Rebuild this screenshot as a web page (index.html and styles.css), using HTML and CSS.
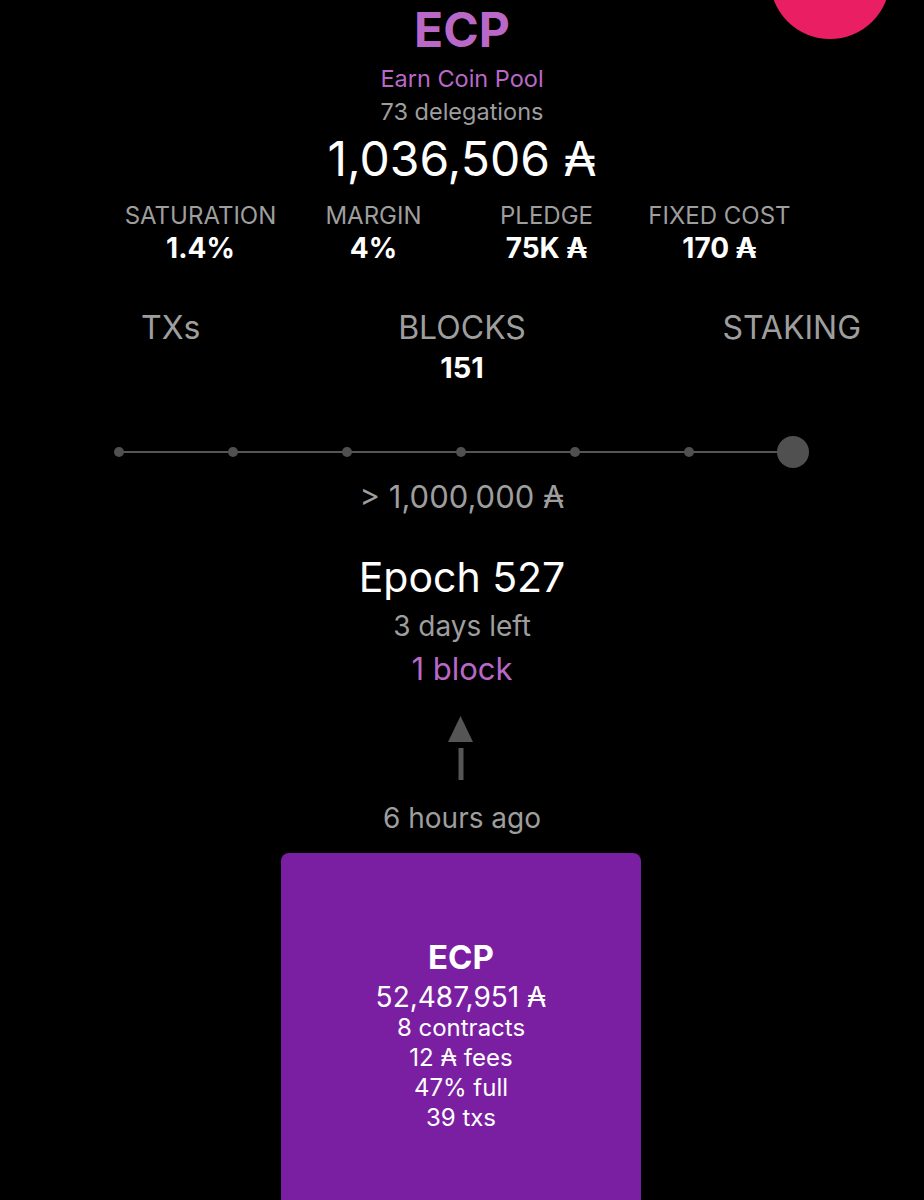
FILE: index.html
```html
<!DOCTYPE html>
<html lang="en">
<head>
  <meta charset="utf-8">
  <link rel="stylesheet" href="styles.css">
</head>
<body>
  <div class="fab"></div>

  <div class="pool">
    <div class="pool-ticker">ECP</div>
    <div class="pool-name">Earn Coin Pool</div>
    <div class="pool-delegations">73 delegations</div>
    <div class="pool-stake">1,036,506 ₳</div>

    <div class="stats">
      <div class="stat">
        <div class="stat-label">SATURATION</div>
        <div class="stat-value">1.4%</div>
      </div>
      <div class="stat">
        <div class="stat-label">MARGIN</div>
        <div class="stat-value">4%</div>
      </div>
      <div class="stat">
        <div class="stat-label">PLEDGE</div>
        <div class="stat-value">75K ₳</div>
      </div>
      <div class="stat">
        <div class="stat-label">FIXED COST</div>
        <div class="stat-value">170 ₳</div>
      </div>
    </div>
  </div>

  <div class="tabs">
    <div class="tab tab-left">TXs</div>
    <div class="tab tab-center">
      BLOCKS
      <div class="tab-count">151</div>
    </div>
    <div class="tab tab-right">STAKING</div>
  </div>

  <!-- stake range slider -->
  <svg class="slider" width="695" height="34" viewBox="0 0 695 34">
    <line x1="5" y1="17" x2="679" y2="17" stroke="#555" stroke-width="2" />
    <circle cx="5" cy="17" r="5" fill="#505050" />
    <circle cx="119" cy="17" r="5" fill="#505050" />
    <circle cx="233" cy="17" r="5" fill="#505050" />
    <circle cx="347" cy="17" r="5" fill="#505050" />
    <circle cx="461" cy="17" r="5" fill="#505050" />
    <circle cx="575" cy="17" r="5" fill="#505050" />
    <circle cx="679" cy="17" r="16" fill="#505050" />
  </svg>
  <div class="slider-label">&gt; 1,000,000 ₳</div>

  <div class="epoch">
    <div class="epoch-title">Epoch 527</div>
    <div class="epoch-left">3 days left</div>
    <div class="epoch-blocks">1 block</div>
  </div>

  <svg class="arrow" width="26" height="64" viewBox="0 0 26 64">
    <polygon points="12.5,0 25,26 0,26" fill="#555" />
    <rect x="10.5" y="32" width="5" height="32" fill="#555" />
  </svg>
  <div class="last-block">6 hours ago</div>

  <div class="block-card">
    <div class="block-pool">ECP</div>
    <div class="block-amount">52,487,951 ₳</div>
    <div class="block-line">8 contracts</div>
    <div class="block-line">12 ₳ fees</div>
    <div class="block-line">47% full</div>
    <div class="block-line">39 txs</div>
  </div>
</body>
</html>
```

FILE: styles.css
```css
:root {
  --bg: #000;
  --fg: #fff;
  --muted: #9e9e9e;
  --accent: #ba68c8;
  --card: #7b1fa2;
  --pink: #e91e63;
}

* {
  box-sizing: border-box;
}

html, body {
  overflow: hidden;
}

body {
  margin: 0;
  background: var(--bg);
  color: var(--fg);
  font-family: "Inter", "DejaVu Sans", sans-serif;
  text-align: center;
}

.fab {
  position: absolute;
  top: -81px;
  right: 34px;
  width: 120px;
  height: 120px;
  border-radius: 50%;
  background: var(--pink);
}

.pool-ticker {
  font-size: 48px;
  line-height: 60px;
  font-weight: 700;
  color: var(--accent);
}

.pool-name {
  margin-top: 2px;
  font-size: 23.5px;
  line-height: 33px;
  color: var(--accent);
}

.pool-delegations {
  font-size: 23.5px;
  line-height: 33px;
  color: var(--muted);
}

.pool-stake {
  margin-top: 3px;
  font-size: 48px;
  line-height: 56px;
}

.stats {
  display: grid;
  grid-template-columns: repeat(4, 173px);
  justify-content: center;
  margin-top: 15px;
  margin-left: -4px;
}

.stat-label {
  font-size: 24px;
  line-height: 28px;
  color: var(--muted);
}

.stat-value {
  font-size: 28px;
  line-height: 36px;
  font-weight: 700;
}

.tabs {
  display: grid;
  grid-template-columns: 1fr auto 1fr;
  margin-top: 44px;
  padding: 0 63px;
  font-size: 32px;
  line-height: 36px;
  color: var(--muted);
}

.tab-left {
  justify-self: start;
  margin-left: 78px;
}

.tab-right {
  justify-self: end;
}

.tab-count {
  margin-top: 2px;
  font-size: 29px;
  line-height: 40px;
  font-weight: 700;
  color: var(--fg);
}

.slider {
  display: block;
  margin: 47px auto 0;
  transform: translateX(-1px);
}

.slider-label {
  margin-top: 11px;
  font-size: 31px;
  line-height: 34px;
  color: var(--muted);
}

.epoch {
  margin-top: 40px;
}

.epoch-title {
  font-size: 41px;
  line-height: 46px;
}

.epoch-left {
  margin-top: 9px;
  font-size: 28px;
  line-height: 34px;
  color: var(--muted);
}

.epoch-blocks {
  margin-top: 8px;
  font-size: 31px;
  line-height: 36px;
  color: var(--accent);
}

.arrow {
  display: block;
  margin: 29px auto 0;
  transform: translateX(-1px);
}

.last-block {
  margin-top: 21px;
  font-size: 28px;
  line-height: 34px;
  color: var(--muted);
}

.block-card {
  width: 360px;
  height: 347px;
  margin: 18px auto 0;
  padding-top: 83px;
  border-radius: 8px 8px 0 0;
  background: var(--card);
  transform: translateX(-1px);
}

.block-pool {
  font-size: 33px;
  line-height: 42px;
  font-weight: 700;
}

.block-amount {
  margin-top: 3px;
  font-size: 28px;
  line-height: 32px;
}

.block-line {
  font-size: 24px;
  line-height: 30px;
}
```
